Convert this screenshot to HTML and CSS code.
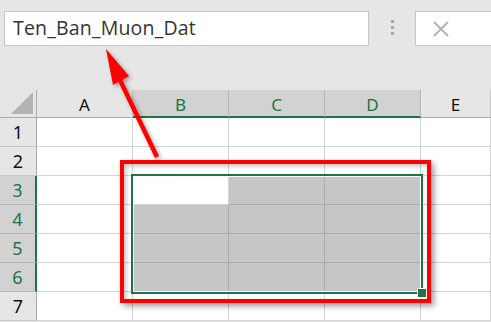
FILE: index.html
```html
<!DOCTYPE html>
<html lang="vi">
<head>
  <meta charset="UTF-8" />
  <title>Name Box</title>
  <link rel="stylesheet" href="styles.css">
</head>
<body>
  <div class="toolbar">
    <div class="namebox">Ten_Ban_Muon_Dat</div>
    <div class="grip"><span></span><span></span><span></span></div>
    <div class="formula">
      <svg class="cancel" width="18" height="18" viewBox="0 0 18 18"><path d="M2 2 L16 16 M16 2 L2 16" stroke="#b4b4b4" stroke-width="2" fill="none"/></svg>
    </div>
  </div>

  <div class="sheet">
    <div class="corner"><svg width="22" height="22" viewBox="0 0 22 22"><polygon points="22,0 22,22 0,22" fill="#b3b3b3"/></svg></div>
    <div class="colhead">A</div>
    <div class="colhead sel">B</div>
    <div class="colhead sel">C</div>
    <div class="colhead sel">D</div>
    <div class="colhead">E</div>

    <div class="rowhead">1</div><div class="cell"></div><div class="cell"></div><div class="cell"></div><div class="cell"></div><div class="cell"></div>
    <div class="rowhead">2</div><div class="cell"></div><div class="cell"></div><div class="cell"></div><div class="cell"></div><div class="cell"></div>
    <div class="rowhead sel">3</div><div class="cell"></div><div class="cell"></div><div class="cell hl"></div><div class="cell hl"></div><div class="cell"></div>
    <div class="rowhead sel">4</div><div class="cell"></div><div class="cell hl"></div><div class="cell hl"></div><div class="cell hl"></div><div class="cell"></div>
    <div class="rowhead sel">5</div><div class="cell"></div><div class="cell hl"></div><div class="cell hl"></div><div class="cell hl"></div><div class="cell"></div>
    <div class="rowhead sel">6</div><div class="cell"></div><div class="cell hl"></div><div class="cell hl"></div><div class="cell hl"></div><div class="cell"></div>
    <div class="rowhead">7</div><div class="cell"></div><div class="cell"></div><div class="cell"></div><div class="cell"></div><div class="cell"></div>

    <div class="selection"><div class="handle"></div></div>
  </div>

  <div class="redbox"></div>
  <svg class="arrow" width="491" height="322" viewBox="0 0 491 322">
    <defs>
      <filter id="sh" x="-20%" y="-20%" width="150%" height="150%">
        <feDropShadow dx="2" dy="2" stdDeviation="2" flood-color="#000" flood-opacity="0.35"/>
      </filter>
    </defs>
    <g filter="url(#sh)">
      <line x1="157" y1="157" x2="119" y2="78" stroke="#ff0000" stroke-width="4.5"/>
      <polygon points="106,49 113,85 129,76" fill="#ff0000"/>
    </g>
  </svg>
</body>
</html>
```

FILE: styles.css
```css
* { box-sizing: border-box; }
html, body { margin: 0; padding: 0; background: #e6e6e6; overflow: hidden; width: 491px; height: 322px; }
body { position: relative; font-family: "Noto Sans", "Open Sans", sans-serif; }

.toolbar { height: 90px; display: flex; align-items: flex-start; padding: 11px 0 0 4px; }
.namebox { width: 365px; height: 35px; background: #fff; border: 1px solid #c6c6c6; font-family: "Open Sans", sans-serif; font-size: 19.5px; line-height: 26px; color: #333; padding: 3px 0 0 8px; letter-spacing: 0.2px; }
.grip { width: 46px; display: flex; flex-direction: column; align-items: center; gap: 3px; padding-top: 9px; }
.grip span { width: 3px; height: 3px; background: #a8a8a8; }
.formula { flex: 1; height: 35px; background: #fff; border: 1px solid #c6c6c6; border-right: none; padding: 8px 0 0 16px; }
.cancel { display: block; }

.sheet { position: relative; display: grid; grid-template-columns: 37px 96px 96px 96px 96px 70px; grid-template-rows: 28px repeat(7, 29px); background: #fff; }
.corner { background: #e6e6e6; border-right: 1px solid #ababab; border-bottom: 1px solid #ababab; display: flex; align-items: flex-end; justify-content: flex-end; padding: 0 3px 3px 0; }
.colhead { background: #e6e6e6; border-right: 1px solid #c8c8c8; border-bottom: 1px solid #ababab; display: flex; align-items: center; justify-content: center; font-size: 17px; color: #111; padding-top: 2px; }
.colhead.sel { background: #d2d2d2; color: #217346; border-bottom: 2px solid #217346; border-right-color: #b6b6b6; }
.rowhead { background: #e6e6e6; border-right: 1px solid #ababab; border-bottom: 1px solid #c8c8c8; display: flex; align-items: center; justify-content: center; font-size: 18px; color: #111; }
.rowhead.sel { background: #d2d2d2; color: #217346; border-right: 2px solid #217346; border-bottom-color: #b6b6b6; }
.cell { border-right: 1px solid #d4d4d4; border-bottom: 1px solid #d4d4d4; }
.cell.hl { background: #c6c6c6; border-color: #ababab; }

.selection { position: absolute; left: 131px; top: 84px; width: 292px; height: 120px; border: 2px solid #217346; box-shadow: inset 0 0 0 1px #fff; }
.handle { position: absolute; right: -5px; bottom: -5px; width: 8px; height: 8px; background: #217346; outline: 1px solid #fff; }

.redbox { position: absolute; left: 120px; top: 160px; width: 311px; height: 143px; border: 4.5px solid #ff0000; box-shadow: 3px 3px 6px rgba(0,0,0,0.4), inset 2px 2px 4px rgba(0,0,0,0.25); }
.arrow { position: absolute; left: 0; top: 0; pointer-events: none; }
```
